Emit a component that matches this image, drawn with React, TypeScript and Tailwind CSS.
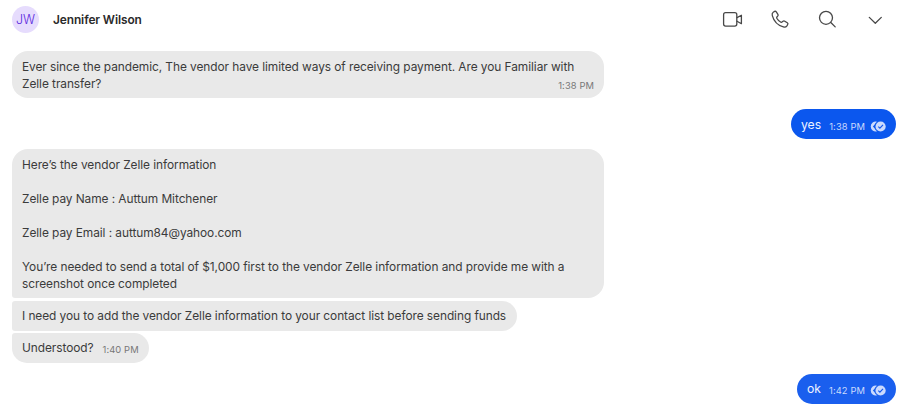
import { FC, ReactNode } from "react";

interface BubbleProps {
  children: ReactNode;
  className: string;
}

const Incoming: FC<BubbleProps> = ({ children, className }) => (
  <div
    className={`bg-[#e9e9e9] px-[10px] text-[11.9px] leading-[17px] tracking-[-0.065px] text-[#3b3b3b] ${className}`}
  >
    {children}
  </div>
);

interface OutgoingProps {
  text: string;
  time: string;
  className: string;
}

const Outgoing: FC<OutgoingProps> = ({ text, time, className }) => (
  <div
    className={`flex h-[30px] items-center justify-between self-end rounded-full pr-[10px] pl-[10px] text-[12.2px] leading-[17px] text-[#eef3ff] ${className}`}
  >
    <span>{text}</span>
    <span className="mt-[5px] flex items-center gap-[5px] text-[9.35px] leading-3 tracking-[0.1px] whitespace-nowrap text-[#cbdafd]">
      {time}
      <ReadReceipt />
    </span>
  </div>
);

const ReadReceipt = () => (
  <svg className="-mt-px h-[11px] w-4 shrink-0" viewBox="0 0 16 11" fill="none">
    <path
      d="M7 0.8A4.9 4.9 0 1 0 7 10.2A6.4 6.4 0 0 1 4.5 7.3L2.9 5.5L4.5 3.7A6.4 6.4 0 0 1 7 0.8Z"
      fill="#cbdafd"
    />
    <circle cx="10.6" cy="5.5" r="5.1" fill="#cbdafd" />
    <path d="M8.3 5.6L9.9 7.2L13 3.8" stroke="#1258ee" strokeWidth="1.1" />
  </svg>
);

const Header = () => (
  <header className="flex h-[39px] items-center pl-3">
    <div className="flex size-[27px] items-center justify-center rounded-full bg-[#e6dcfd] pt-px text-[12.4px] font-light text-[#5b27dd]">
      JW
    </div>
    <h1 className="mt-px ml-[14px] text-[11.9px] font-semibold tracking-[-0.09px] text-[#2a2a2a]">
      Jennifer Wilson
    </h1>
    <svg
      className="ml-auto h-10 w-[200px]"
      viewBox="0 0 200 40"
      fill="none"
      stroke="#484848"
      strokeWidth="1.3"
      strokeLinecap="round"
      strokeLinejoin="round"
    >
      {/* video */}
      <rect x="23.6" y="12.7" width="13.2" height="13.4" rx="2" />
      <path d="M37 17.6L41.4 15.2V23.7L37 21.3" />
      {/* call */}
      <path d="M73.2 12.2L74.6 11.4C75.2 11.1 75.9 11.3 76.3 11.8L77.9 14.3C78.3 14.9 78.2 15.6 77.7 16.1L76.9 17C76.6 17.4 76.6 17.8 76.8 18.2C77.7 19.8 79.2 21.3 80.9 22.2C81.3 22.4 81.7 22.4 82 22.1L83 21.3C83.5 20.9 84.2 20.8 84.8 21.2L87.3 22.8C87.9 23.2 88.1 23.9 87.7 24.5L86.9 25.8C86.2 26.8 84.9 27.3 83.4 26.9C78.2 25.5 73.8 21 72.3 15.6C71.9 14.1 72.2 12.9 73.2 12.2Z" />
      {/* search */}
      <circle cx="126" cy="17.8" r="6.5" />
      <path d="M130.8 22.5L135.2 26.9" />
      {/* more */}
      <path d="M169.3 17.4L175.3 23.3L181.3 17.4" />
    </svg>
  </header>
);

export default function App() {
  return (
    <div className="h-[408px] w-[900px] overflow-hidden bg-white font-['Inter',sans-serif]">
      <Header />
      <main className="flex flex-col items-start pt-3 pr-1 pl-3">
        <Incoming className="flex h-[47px] w-[592px] justify-between rounded-[16px] pt-[6.5px]">
          <p className="whitespace-nowrap">
            Ever since the pandemic, The vendor have limited ways of receiving
            payment. Are you Familiar with
            <br />
            Zelle transfer?
          </p>
          <span className="-ml-10 self-end pb-[6px] text-[9.35px] leading-3 tracking-[0.1px] whitespace-nowrap text-[#777777]">
            1:38 PM
          </span>
        </Incoming>
        <Outgoing
          text="yes"
          time="1:38 PM"
          className="mt-[11px] w-[105px] bg-[#0b57ee]"
        />
        <Incoming className="mt-[10px] h-[149px] w-[592px] rounded-[16px] rounded-bl-[3px] pt-[6.5px]">
          <p>Here’s the vendor Zelle information</p>
          <p className="mt-[17px]">Zelle pay Name : Auttum Mitchener</p>
          <p className="mt-[17px]">Zelle pay Email : auttum84@yahoo.com</p>
          <p className="mt-[17px] whitespace-nowrap">
            You’re needed to send a total of $1,000 first to the vendor Zelle
            information and provide me with a
            <br />
            screenshot once completed
          </p>
        </Incoming>
        <Incoming className="mt-[2.5px] h-[30px] w-[505px] rounded-r-[15px] rounded-l-[3px] pt-[6.5px] whitespace-nowrap">
          I need you to add the vendor Zelle information to your contact list
          before sending funds
        </Incoming>
        <Incoming className="mt-[2px] flex h-[30px] w-[137px] rounded-[15px] rounded-tl-[3px] pt-[6.5px] whitespace-nowrap">
          <span>Understood?</span>
          <span className="mt-[5px] ml-[9px] text-[9.35px] leading-3 tracking-[0.1px] text-[#777777]">
            1:40 PM
          </span>
        </Incoming>
        <Outgoing
          text="ok"
          time="1:42 PM"
          className="mt-[11px] w-[99px] bg-[#1a5fee]"
        />
      </main>
    </div>
  );
}
